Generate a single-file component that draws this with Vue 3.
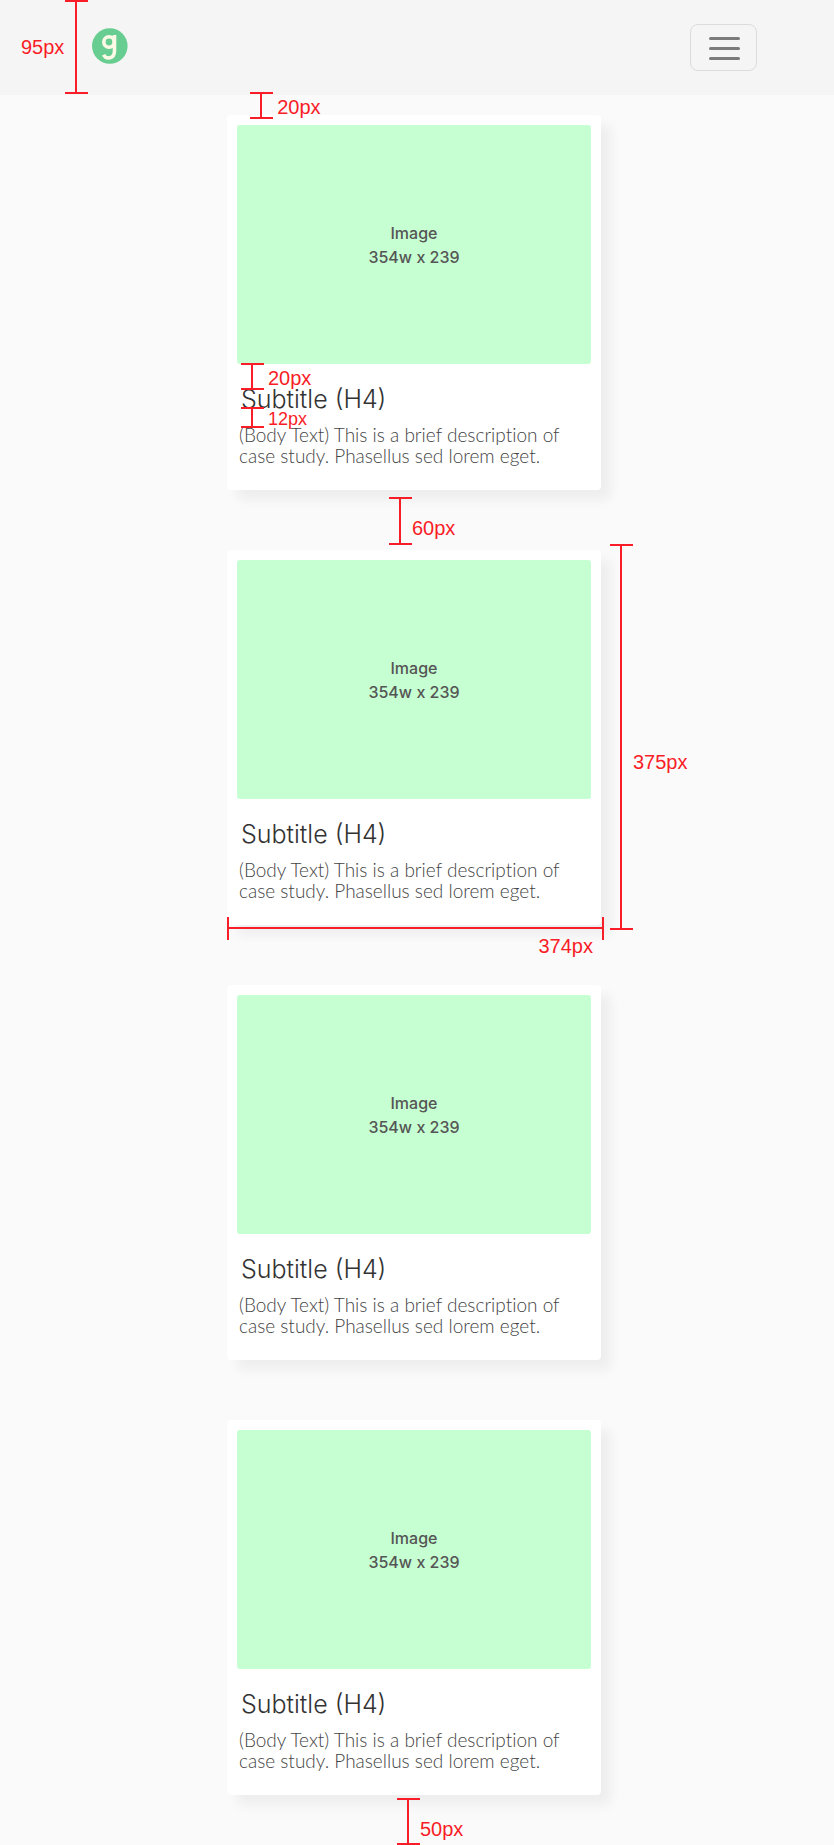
<script setup>
const cards = [
  {
    id: 1,
    marks: [
      { name: 'above-title', label: '20px' },
      { name: 'below-title', label: '12px' },
      { name: 'card-gap', label: '60px' },
    ],
  },
  {
    id: 2,
    marks: [
      { name: 'card-height', label: '375px' },
      { name: 'card-width', label: '374px' },
    ],
  },
  { id: 3, marks: [] },
  { id: 4, marks: [{ name: 'page-end', label: '50px' }] },
]
</script>

<template>
  <div class="page">
    <header class="header">
      <a class="logo" href="#" aria-label="Home">
        <svg viewBox="0 0 36 36" aria-hidden="true">
          <circle cx="17.8" cy="18" r="17.8" fill="#68cd90" />
          <g fill="none" stroke="#fcfae6" stroke-width="3.6">
            <circle cx="17" cy="14" r="5.2" />
            <path d="M22.5 7V22.5C22.5 31.5 14 31.5 11.6 26.8" />
          </g>
        </svg>
      </a>
      <button class="menu" type="button" aria-label="Open menu">
        <span class="bar"></span>
        <span class="bar"></span>
        <span class="bar"></span>
      </button>
      <div class="mark header-height"><span class="label">95px</span></div>
      <div class="mark top-gap"><span class="label">20px</span></div>
    </header>

    <main class="cards">
      <article v-for="card in cards" :key="card.id" class="card">
        <div class="picture">Image<br />354w x 239</div>
        <h4 class="subtitle">Subtitle (H4)</h4>
        <p class="text">
          (Body Text) This is a brief description of<br />case study. Phasellus sed lorem eget.
        </p>
        <div v-for="mark in card.marks" :key="mark.name" class="mark" :class="mark.name">
          <span class="label">{{ mark.label }}</span>
        </div>
      </article>
    </main>
  </div>
</template>

<style>
body {
  background: #fafafa;
}
</style>

<style scoped>
.page {
  background: #fafafa;
  font-family: Inter, "Liberation Sans", sans-serif;
}

.header {
  position: relative;
  z-index: 1;
  box-sizing: border-box;
  display: flex;
  align-items: center;
  justify-content: space-between;
  min-height: 95px;
  padding: 0 77px 0 92px;
  background: #f5f5f5;
}

.logo {
  display: block;
  width: 36px;
  height: 36px;
  margin-bottom: 3px;
}

.logo svg {
  display: block;
}

.menu {
  box-sizing: border-box;
  display: flex;
  flex-direction: column;
  align-items: center;
  justify-content: center;
  gap: 7px;
  width: 67px;
  height: 47px;
  padding: 2px 0 0 2px;
  border: 1px solid #dcdcdc;
  border-radius: 8px;
  background: transparent;
}

.bar {
  width: 31px;
  height: 3px;
  border-radius: 2px;
  background: #7b7b7b;
}

.cards {
  display: flex;
  flex-direction: column;
  align-items: center;
  gap: 60px;
  padding: 20px 6px 50px 0;
}

.card {
  position: relative;
  box-sizing: border-box;
  width: 100%;
  max-width: 374px;
  min-height: 375px;
  padding: 10px 10px 20px;
  border-radius: 4px;
  background: #fff;
  box-shadow: 10px 10px 12px rgba(0, 0, 0, 0.05);
}

.picture {
  display: flex;
  align-items: center;
  justify-content: center;
  height: 239px;
  border-radius: 3px;
  background: #c6ffd2;
  color: #555;
  font-size: 16px;
  font-weight: 500;
  line-height: 24px;
  text-align: center;
}

.subtitle {
  margin: 20px 0 10px 4px;
  color: #333;
  font-size: 25px;
  font-weight: 300;
  line-height: 30px;
}

.text {
  margin: 0 0 0 2px;
  color: #444;
  font-family: Lato, "Liberation Sans", sans-serif;
  font-size: 19px;
  font-weight: 300;
  font-variant-ligatures: none;
  line-height: 21px;
  white-space: nowrap;
}

/* Dimension lines: two caps joined by a rule */
.mark {
  position: absolute;
  box-sizing: border-box;
  width: 23px;
  border: solid #f81d27;
  border-width: 2px 0;
}

.mark::before {
  content: "";
  position: absolute;
  top: 0;
  bottom: 0;
  left: 10px;
  width: 2px;
  background: #f81d27;
}

.label {
  position: absolute;
  left: 27px;
  color: #f81d27;
  font-family: "Liberation Sans", Arial, sans-serif;
  font-size: 20px;
  line-height: 24px;
}

.header-height {
  top: 0;
  left: 65px;
  height: 94px;
}

.header-height .label {
  top: 33px;
  left: -44px;
}

.top-gap {
  top: 92px;
  left: 30%;
  height: 27px;
}

.top-gap .label {
  top: 1px;
}

.above-title {
  top: 248px;
  left: 14px;
  height: 27px;
}

.above-title .label {
  top: 1px;
}

.below-title {
  top: 292px;
  left: 14px;
  height: 21px;
}

.below-title .label {
  top: -2px;
  font-size: 18px;
}

.card-gap {
  top: 382px;
  left: 162px;
  height: 48px;
}

.card-gap .label {
  top: 17px;
  left: 23px;
}

.card-height {
  top: -6px;
  left: 383px;
  height: 386px;
}

.card-height .label {
  top: 204px;
  left: 23px;
}

.card-width {
  top: 367px;
  left: 0;
  width: 377px;
  height: 23px;
  border-width: 0 2px;
}

.card-width::before {
  top: 10px;
  right: 0;
  bottom: auto;
  left: 0;
  width: auto;
  height: 2px;
}

.card-width .label {
  top: 17px;
  right: 9px;
  left: auto;
}

.page-end {
  top: 378px;
  left: 170px;
  height: 47px;
}

.page-end .label {
  top: 17px;
  left: 23px;
}
</style>
